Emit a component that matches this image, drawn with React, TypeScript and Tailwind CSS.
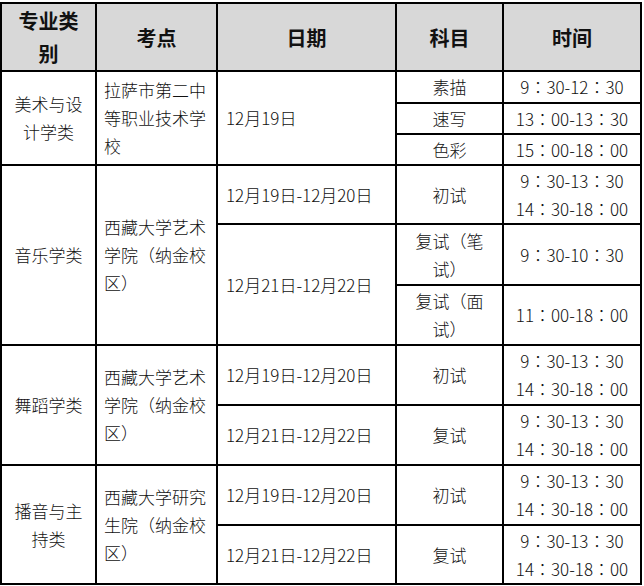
const FONT = { fontFamily: '"Noto Sans CJK SC", "Noto Sans", sans-serif' };
const TIME_FONT = { fontFamily: '"Noto Sans CJK JP", "Noto Sans", sans-serif' };

const cell = "border-2 border-black text-[17px] leading-[28px] font-light text-[#111] align-middle";
const head = "border-2 border-black bg-[#d8d8d8] text-[20px] leading-[33px] font-bold text-[#111] text-center align-middle";

function Lines({ items }: { items: string[] }) {
  return (
    <>
      {items.map((t, i) => (
        <div key={i} className="whitespace-nowrap">
          {t}
        </div>
      ))}
    </>
  );
}

function Time({ items }: { items: string[] }) {
  return (
    <td className={`${cell} text-center`} style={TIME_FONT}>
      <Lines items={items} />
    </td>
  );
}

export default function App() {
  return (
    <div className="bg-white w-[644px] h-[586px] pt-[2px]" style={FONT}>
      <table className="w-[642px] table-fixed border-collapse border-2 border-black">
        <colgroup>
          <col className="w-[95px]" />
          <col className="w-[121px]" />
          <col className="w-[179px]" />
          <col className="w-[107px]" />
          <col className="w-[138px]" />
        </colgroup>
        <tbody>
          <tr className="h-[68px]">
            <th className={head}>
              <Lines items={["专业类", "别"]} />
            </th>
            <th className={head}>考点</th>
            <th className={head}>日期</th>
            <th className={head}>科目</th>
            <th className={head}>时间</th>
          </tr>

          {/* 美术与设计学类 */}
          <tr className="h-[32px]">
            <td rowSpan={3} className={`${cell} text-center`}>
              <Lines items={["美术与设", "计学类"]} />
            </td>
            <td rowSpan={3} className={`${cell} pl-[7px]`}>
              <Lines items={["拉萨市第二中", "等职业技术学", "校"]} />
            </td>
            <td rowSpan={3} className={`${cell} pl-[8px]`}>12月19日</td>
            <td className={`${cell} text-center`}>素描</td>
            <Time items={["9：30-12：30"]} />
          </tr>
          <tr className="h-[31px]">
            <td className={`${cell} text-center`}>速写</td>
            <Time items={["13：00-13：30"]} />
          </tr>
          <tr className="h-[31px]">
            <td className={`${cell} text-center`}>色彩</td>
            <Time items={["15：00-18：00"]} />
          </tr>

          {/* 音乐学类 */}
          <tr className="h-[59px]">
            <td rowSpan={3} className={`${cell} text-center`}>音乐学类</td>
            <td rowSpan={3} className={`${cell} pl-[7px]`}>
              <Lines items={["西藏大学艺术", "学院（纳金校", "区）"]} />
            </td>
            <td className={`${cell} pl-[8px]`}>12月19日-12月20日</td>
            <td className={`${cell} text-center`}>初试</td>
            <Time items={["9：30-13：30", "14：30-18：00"]} />
          </tr>
          <tr className="h-[61px]">
            <td rowSpan={2} className={`${cell} pl-[8px]`}>12月21日-12月22日</td>
            <td className={`${cell} text-center`}>
              <Lines items={["复试（笔", "试）"]} />
            </td>
            <Time items={["9：30-10：30"]} />
          </tr>
          <tr className="h-[60px]">
            <td className={`${cell} text-center`}>
              <Lines items={["复试（面", "试）"]} />
            </td>
            <Time items={["11：00-18：00"]} />
          </tr>

          {/* 舞蹈学类 */}
          <tr className="h-[60px]">
            <td rowSpan={2} className={`${cell} text-center`}>舞蹈学类</td>
            <td rowSpan={2} className={`${cell} pl-[7px]`}>
              <Lines items={["西藏大学艺术", "学院（纳金校", "区）"]} />
            </td>
            <td className={`${cell} pl-[8px]`}>12月19日-12月20日</td>
            <td className={`${cell} text-center`}>初试</td>
            <Time items={["9：30-13：30", "14：30-18：00"]} />
          </tr>
          <tr className="h-[60px]">
            <td className={`${cell} pl-[8px]`}>12月21日-12月22日</td>
            <td className={`${cell} text-center`}>复试</td>
            <Time items={["9：30-13：30", "14：30-18：00"]} />
          </tr>

          {/* 播音与主持类 */}
          <tr className="h-[60px]">
            <td rowSpan={2} className={`${cell} text-center`}>
              <Lines items={["播音与主", "持类"]} />
            </td>
            <td rowSpan={2} className={`${cell} pl-[7px]`}>
              <Lines items={["西藏大学研究", "生院（纳金校", "区）"]} />
            </td>
            <td className={`${cell} pl-[8px]`}>12月19日-12月20日</td>
            <td className={`${cell} text-center`}>初试</td>
            <Time items={["9：30-13：30", "14：30-18：00"]} />
          </tr>
          <tr className="h-[59px]">
            <td className={`${cell} pl-[8px]`}>12月21日-12月22日</td>
            <td className={`${cell} text-center`}>复试</td>
            <Time items={["9：30-13：30", "14：30-18：00"]} />
          </tr>
        </tbody>
      </table>
    </div>
  );
}
